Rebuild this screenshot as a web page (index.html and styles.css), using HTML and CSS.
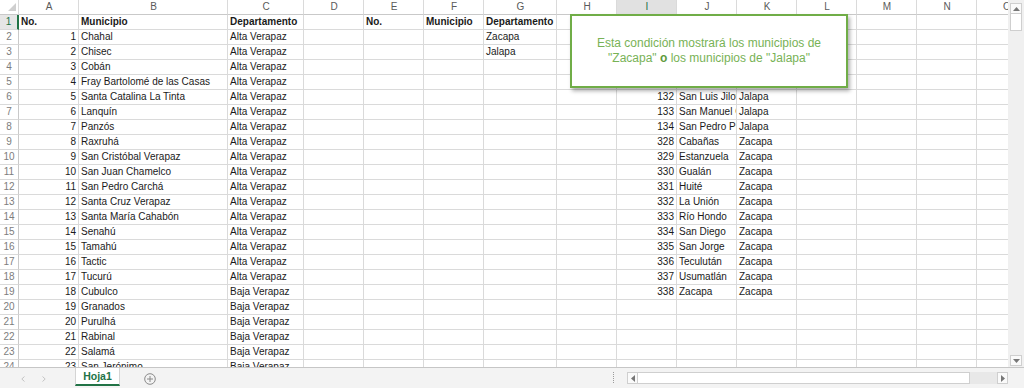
FILE: index.html
```html
<!DOCTYPE html>
<html lang="es">
<head>
<meta charset="utf-8">
<title>Hoja1</title>
<link rel="stylesheet" href="styles.css">
</head>
<body>
<div class="app">
  <div class="main">
    <div class="sheet">
      <div class="row hdr"><span class="corner"></span><span>A</span><span>B</span><span>C</span><span>D</span><span>E</span><span>F</span><span>G</span><span>H</span><span class="hsel">I</span><span>J</span><span>K</span><span>L</span><span>M</span><span>N</span><span>O</span></div>
      <div class="row"><span class="rh rsel">1</span><span class="b">No.</span><span class="b">Municipio</span><span class="b">Departamento</span><span></span><span class="b">No.</span><span class="b">Municipio</span><span class="b">Departamento</span><span></span><span></span><span></span><span></span><span></span><span></span><span></span><span></span></div>
      <div class="row"><span class="rh">2</span><span class="n">1</span><span>Chahal</span><span>Alta Verapaz</span><span></span><span></span><span></span><span>Zacapa</span><span></span><span></span><span></span><span></span><span></span><span></span><span></span><span></span></div>
      <div class="row"><span class="rh">3</span><span class="n">2</span><span>Chisec</span><span>Alta Verapaz</span><span></span><span></span><span></span><span>Jalapa</span><span></span><span></span><span></span><span></span><span></span><span></span><span></span><span></span></div>
      <div class="row"><span class="rh">4</span><span class="n">3</span><span>Cobán</span><span>Alta Verapaz</span><span></span><span></span><span></span><span></span><span></span><span></span><span></span><span></span><span></span><span></span><span></span><span></span></div>
      <div class="row"><span class="rh">5</span><span class="n">4</span><span>Fray Bartolomé de las Casas</span><span>Alta Verapaz</span><span></span><span></span><span></span><span></span><span></span><span></span><span></span><span></span><span></span><span></span><span></span><span></span></div>
      <div class="row"><span class="rh">6</span><span class="n">5</span><span>Santa Catalina La Tinta</span><span>Alta Verapaz</span><span></span><span></span><span></span><span></span><span></span><span class="n">132</span><span>San Luis Jilot</span><span>Jalapa</span><span></span><span></span><span></span><span></span></div>
      <div class="row"><span class="rh">7</span><span class="n">6</span><span>Lanquín</span><span>Alta Verapaz</span><span></span><span></span><span></span><span></span><span></span><span class="n">133</span><span>San Manuel C</span><span>Jalapa</span><span></span><span></span><span></span><span></span></div>
      <div class="row"><span class="rh">8</span><span class="n">7</span><span>Panzós</span><span>Alta Verapaz</span><span></span><span></span><span></span><span></span><span></span><span class="n">134</span><span>San Pedro Pi</span><span>Jalapa</span><span></span><span></span><span></span><span></span></div>
      <div class="row"><span class="rh">9</span><span class="n">8</span><span>Raxruhá</span><span>Alta Verapaz</span><span></span><span></span><span></span><span></span><span></span><span class="n">328</span><span>Cabañas</span><span>Zacapa</span><span></span><span></span><span></span><span></span></div>
      <div class="row"><span class="rh">10</span><span class="n">9</span><span>San Cristóbal Verapaz</span><span>Alta Verapaz</span><span></span><span></span><span></span><span></span><span></span><span class="n">329</span><span>Estanzuela</span><span>Zacapa</span><span></span><span></span><span></span><span></span></div>
      <div class="row"><span class="rh">11</span><span class="n">10</span><span>San Juan Chamelco</span><span>Alta Verapaz</span><span></span><span></span><span></span><span></span><span></span><span class="n">330</span><span>Gualán</span><span>Zacapa</span><span></span><span></span><span></span><span></span></div>
      <div class="row"><span class="rh">12</span><span class="n">11</span><span>San Pedro Carchá</span><span>Alta Verapaz</span><span></span><span></span><span></span><span></span><span></span><span class="n">331</span><span>Huité</span><span>Zacapa</span><span></span><span></span><span></span><span></span></div>
      <div class="row"><span class="rh">13</span><span class="n">12</span><span>Santa Cruz Verapaz</span><span>Alta Verapaz</span><span></span><span></span><span></span><span></span><span></span><span class="n">332</span><span>La Unión</span><span>Zacapa</span><span></span><span></span><span></span><span></span></div>
      <div class="row"><span class="rh">14</span><span class="n">13</span><span>Santa María Cahabón</span><span>Alta Verapaz</span><span></span><span></span><span></span><span></span><span></span><span class="n">333</span><span>Río Hondo</span><span>Zacapa</span><span></span><span></span><span></span><span></span></div>
      <div class="row"><span class="rh">15</span><span class="n">14</span><span>Senahú</span><span>Alta Verapaz</span><span></span><span></span><span></span><span></span><span></span><span class="n">334</span><span>San Diego</span><span>Zacapa</span><span></span><span></span><span></span><span></span></div>
      <div class="row"><span class="rh">16</span><span class="n">15</span><span>Tamahú</span><span>Alta Verapaz</span><span></span><span></span><span></span><span></span><span></span><span class="n">335</span><span>San Jorge</span><span>Zacapa</span><span></span><span></span><span></span><span></span></div>
      <div class="row"><span class="rh">17</span><span class="n">16</span><span>Tactic</span><span>Alta Verapaz</span><span></span><span></span><span></span><span></span><span></span><span class="n">336</span><span>Teculután</span><span>Zacapa</span><span></span><span></span><span></span><span></span></div>
      <div class="row"><span class="rh">18</span><span class="n">17</span><span>Tucurú</span><span>Alta Verapaz</span><span></span><span></span><span></span><span></span><span></span><span class="n">337</span><span>Usumatlán</span><span>Zacapa</span><span></span><span></span><span></span><span></span></div>
      <div class="row"><span class="rh">19</span><span class="n">18</span><span>Cubulco</span><span>Baja Verapaz</span><span></span><span></span><span></span><span></span><span></span><span class="n">338</span><span>Zacapa</span><span>Zacapa</span><span></span><span></span><span></span><span></span></div>
      <div class="row"><span class="rh">20</span><span class="n">19</span><span>Granados</span><span>Baja Verapaz</span><span></span><span></span><span></span><span></span><span></span><span></span><span></span><span></span><span></span><span></span><span></span><span></span></div>
      <div class="row"><span class="rh">21</span><span class="n">20</span><span>Purulhá</span><span>Baja Verapaz</span><span></span><span></span><span></span><span></span><span></span><span></span><span></span><span></span><span></span><span></span><span></span><span></span></div>
      <div class="row"><span class="rh">22</span><span class="n">21</span><span>Rabinal</span><span>Baja Verapaz</span><span></span><span></span><span></span><span></span><span></span><span></span><span></span><span></span><span></span><span></span><span></span><span></span></div>
      <div class="row"><span class="rh">23</span><span class="n">22</span><span>Salamá</span><span>Baja Verapaz</span><span></span><span></span><span></span><span></span><span></span><span></span><span></span><span></span><span></span><span></span><span></span><span></span></div>
      <div class="row"><span class="rh">24</span><span class="n">23</span><span>San Jerónimo</span><span>Baja Verapaz</span><span></span><span></span><span></span><span></span><span></span><span></span><span></span><span></span><span></span><span></span><span></span><span></span></div>
      <div class="callout"><p class="callout-text">Esta condición mostrará los municipios de<br>"Zacapa" <b>o</b> los municipios de "Jalapa"</p></div>
    </div>
    <div class="vscroll">
      <div class="vbtn"><svg width="7" height="4" viewBox="0 0 7 4"><path d="M0 4 L3.5 0 L7 4 Z" fill="#777"/></svg></div>
      <div class="vthumb"></div>
      <div class="vtrack"></div>
      <div class="vbtn"><svg width="7" height="4" viewBox="0 0 7 4"><path d="M0 0 L3.5 4 L7 0 Z" fill="#777"/></svg></div>
    </div>
  </div>
  <div class="tabs">
    <div class="nav">
      <svg width="4" height="6" viewBox="0 0 4 6"><path d="M3.5 0.5 L0.8 3 L3.5 5.5" fill="none" stroke="#c4c4c4" stroke-width="1"/></svg>
      <svg width="4" height="6" viewBox="0 0 4 6"><path d="M0.5 0.5 L3.2 3 L0.5 5.5" fill="none" stroke="#c4c4c4" stroke-width="1"/></svg>
    </div>
    <div class="tab">Hoja1</div>
    <div class="add"><svg width="12" height="12" viewBox="0 0 12 12"><circle cx="6" cy="6" r="5.3" fill="none" stroke="#8a8a8a" stroke-width="1"/><path d="M6 3 V9 M3 6 H9" stroke="#8a8a8a" stroke-width="1"/></svg></div>
    <div class="spacer"></div>
    <div class="split"></div>
    <div class="hscroll">
      <div class="hbtn"><svg width="4" height="7" viewBox="0 0 4 7"><path d="M4 0 L0 3.5 L4 7 Z" fill="#777"/></svg></div>
      <div class="hthumb"></div>
      <div class="htrack"></div>
      <div class="hbtn"><svg width="4" height="7" viewBox="0 0 4 7"><path d="M0 0 L4 3.5 L0 7 Z" fill="#777"/></svg></div>
    </div>
  </div>
</div>
</body>
</html>
```

FILE: styles.css
```css
html, body {
  margin: 0;
  padding: 0;
  background: #ffffff;
}

body {
  width: 1024px;
  height: 388px;
  overflow: hidden;
  font-family: "Liberation Sans", Arial, sans-serif;
}

.app {
  display: flex;
  flex-direction: column;
  height: 388px;
}

.main {
  display: flex;
  height: 368px;
  box-sizing: border-box;
  border-bottom: 1px solid #c6c6c6;
}

.sheet {
  position: relative;
  flex: 1;
  overflow: hidden;
}

.row {
  display: grid;
  grid-template-columns: 19px 60px 149px 76px 60px 60px 60px 73px 60px 60px 60px 60px 60px 60px 60px 60px;
  height: 15px;
}

.row > span {
  box-sizing: border-box;
  border-right: 1px solid #dadada;
  border-bottom: 1px solid #dadada;
  font-size: 10px;
  line-height: 14px;
  padding: 0 1px 0 2px;
  white-space: nowrap;
  overflow: hidden;
  color: #1a1a1a;
}

.row > .n {
  text-align: right;
  padding: 0 2px 0 1px;
}

.row > .b {
  font-weight: bold;
}

.hdr > span {
  text-align: center;
  color: #5a5a5a;
  border-bottom-color: #c9c9c9;
}

.row > .rh {
  text-align: center;
  color: #7d7d7d;
  padding: 0;
  border-right-color: #c9c9c9;
}

.hdr > .hsel {
  background: #e1e1e1;
  color: #217346;
}

.row > .rsel {
  background: #e6e6e6;
  color: #217346;
  border-right: 2px solid #217346;
}

.hdr > .corner {
  position: relative;
}

.corner::after {
  content: "";
  position: absolute;
  right: 2px;
  bottom: 3px;
  width: 0;
  height: 0;
  border-left: 8px solid transparent;
  border-bottom: 8px solid #cfcfcf;
}

.callout {
  position: absolute;
  left: 570px;
  top: 14px;
  width: 278px;
  height: 74px;
  box-sizing: border-box;
  border: 2px solid #70ad47;
  background: #ffffff;
  box-shadow: 2px 3px 4px rgba(0, 0, 0, 0.32);
  display: flex;
  align-items: center;
  justify-content: center;
}

.callout-text {
  margin: 0;
  text-align: center;
  color: #78b256;
  font-size: 12px;
  line-height: 15px;
  white-space: nowrap;
}

.callout-text b {
  color: #5f9a3c;
}

.vscroll {
  width: 16px;
  background: #f0f0f0;
  display: flex;
  flex-direction: column;
  align-items: center;
  padding: 3px 0 1px;
  box-sizing: border-box;
}

.vbtn {
  width: 12px;
  height: 11px;
  box-sizing: border-box;
  border: 1px solid #cfcfcf;
  background: #fafafa;
  display: flex;
  align-items: center;
  justify-content: center;
}

.vthumb {
  width: 12px;
  height: 17px;
  box-sizing: border-box;
  border: 1px solid #cfcfcf;
  border-top: none;
  background: #ffffff;
}

.vtrack {
  flex: 1;
}

.tabs {
  height: 20px;
  background: #f3f3f3;
  display: flex;
  align-items: flex-start;
}

.nav {
  display: flex;
  gap: 17px;
  padding: 8px 0 0 21px;
  width: 54px;
}

.tab {
  width: 45px;
  height: 18px;
  box-sizing: border-box;
  background: #ffffff;
  border-left: 1px solid #d4d4d4;
  border-right: 1px solid #d4d4d4;
  border-bottom: 2px solid #217346;
  color: #217346;
  font-weight: bold;
  font-size: 10.5px;
  line-height: 16px;
  text-align: center;
}

.add {
  margin-left: 24px;
  padding-top: 3px;
}

.spacer {
  flex: 1;
}

.split {
  width: 1px;
  height: 11px;
  margin-top: 4px;
  margin-right: 12px;
  border-left: 1px dotted #9a9a9a;
}

.hscroll {
  width: 381px;
  height: 12px;
  margin-top: 4px;
  margin-right: 16px;
  display: flex;
  background: #e8e8e8;
}

.hbtn {
  width: 11px;
  height: 12px;
  box-sizing: border-box;
  border: 1px solid #cfcfcf;
  background: #fafafa;
  display: flex;
  align-items: center;
  justify-content: center;
}

.hthumb {
  width: 332px;
  height: 12px;
  box-sizing: border-box;
  border: 1px solid #cfcfcf;
  border-left: none;
  background: #ffffff;
}

.htrack {
  flex: 1;
}
```
